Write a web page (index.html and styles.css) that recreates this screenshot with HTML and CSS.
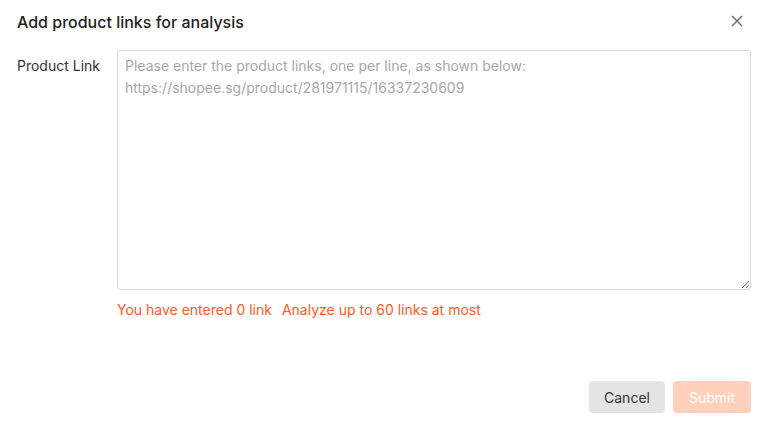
FILE: index.html
```html
<!DOCTYPE html>
<html>
<head>
<meta charset="utf-8">
<link rel="stylesheet" href="styles.css">
</head>
<body>
<div class="dialog">
  <div class="header">
    <div class="title">Add product links for analysis</div>
    <button class="close" aria-label="Close">
      <svg width="12" height="12" viewBox="0 0 12 12"><path d="M1 1L11 11M11 1L1 11" stroke="#666" stroke-width="1.4" fill="none"/></svg>
    </button>
  </div>
  <div class="form-row">
    <label class="label">Product Link</label>
    <div class="field">
      <textarea class="input" placeholder="Please enter the product links, one per line, as shown below:
https://shopee.sg/product/281971115/16337230609"></textarea>
      <div class="hint"><span>You have entered 0 link</span><span>Analyze up to 60 links at most</span></div>
    </div>
  </div>
  <div class="footer">
    <button class="btn btn-cancel">Cancel</button>
    <button class="btn btn-submit" disabled>Submit</button>
  </div>
</div>
</body>
</html>
```
FILE: styles.css
```css
html, body {
  margin: 0;
  padding: 0;
  background: #fff;
}
body {
  font-family: Inter, "Liberation Sans", Arial, sans-serif;
  font-size: 14px;
  color: #333;
}
.dialog {
  width: 768px;
  height: 426px;
  box-sizing: border-box;
  padding: 0 17px;
  display: flex;
  flex-direction: column;
}
.header {
  height: 42px;
  display: flex;
  align-items: center;
  justify-content: space-between;
  margin-bottom: 8px;
}
.title {
  font-size: 16px;
  font-weight: 500;
  color: #222;
  padding-top: 1px;
}
.close {
  border: 0;
  background: none;
  padding: 0;
  width: 12px;
  height: 12px;
  margin-right: 8px;
  display: flex;
  cursor: pointer;
}
.form-row {
  display: flex;
}
.label {
  width: 100px;
  flex: none;
  line-height: 22px;
  padding-top: 5px;
  color: #333;
}
.field {
  flex: 1;
  display: flex;
  flex-direction: column;
}
.input {
  width: 634px;
  height: 240px;
  box-sizing: border-box;
  border: 1px solid #d9d9d9;
  border-radius: 3px;
  padding: 4px 7px;
  font-family: Inter, "Liberation Sans", Arial, sans-serif;
  font-size: 14px;
  line-height: 22px;
  color: #333;
  resize: both;
  outline: none;
}
.input::placeholder {
  color: #a8a8a8;
}
.hint {
  margin-top: 9px;
  line-height: 22px;
  color: #ff5a1f;
  display: flex;
  gap: 10px;
}
.footer {
  margin-top: auto;
  margin-bottom: 13px;
  display: flex;
  justify-content: flex-end;
  gap: 8px;
}
.btn {
  height: 32px;
  border: 0;
  border-radius: 4px;
  font-family: Inter, "Liberation Sans", Arial, sans-serif;
  font-size: 14px;
  padding: 0 10px;
}
.btn-cancel {
  width: 76px;
  background: #e4e4e4;
  color: #333;
}
.btn-submit {
  width: 78px;
  background: #ffd1ba;
  color: #fff;
}
```
